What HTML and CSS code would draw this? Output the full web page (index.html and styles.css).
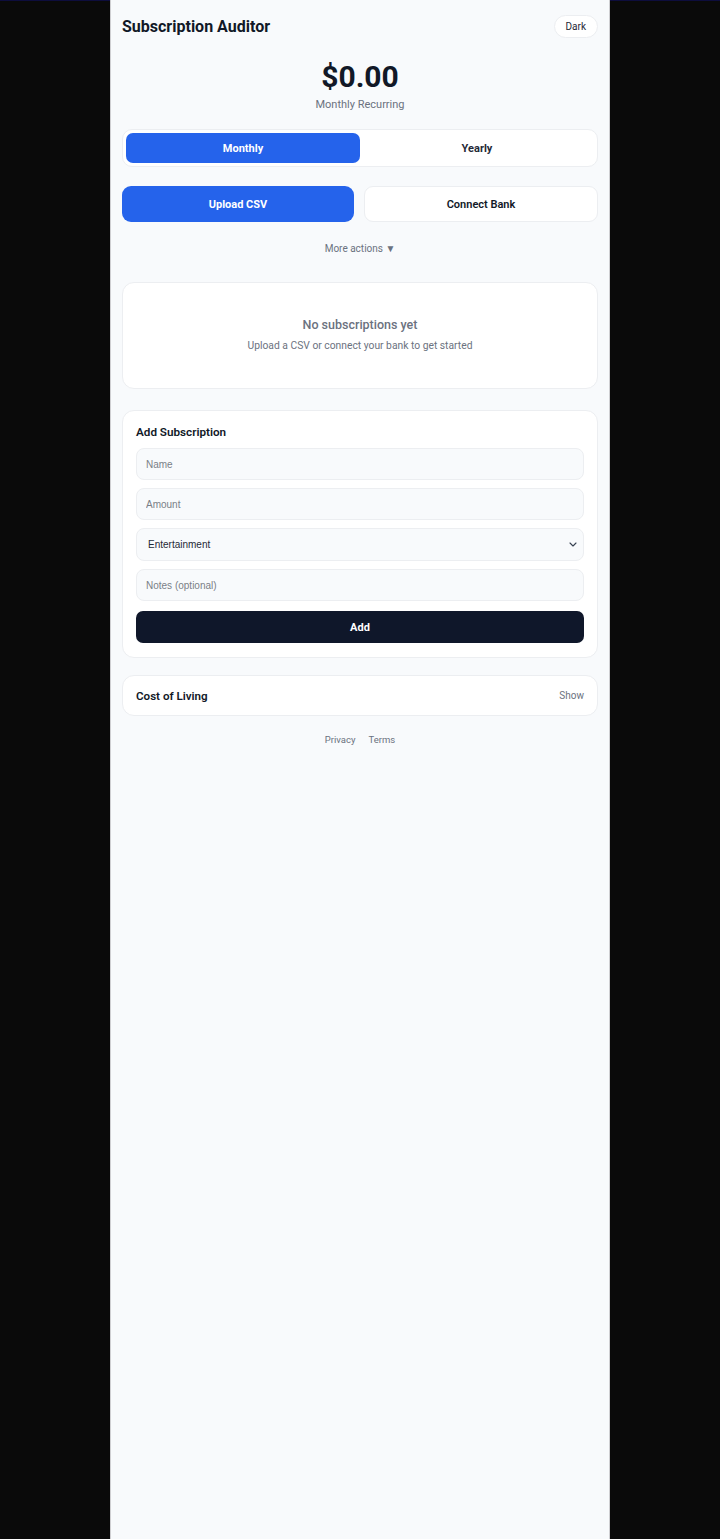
FILE: index.html
```html
<!DOCTYPE html>
<html lang="en">
<head>
<meta charset="utf-8">
<title>Subscription Auditor</title>
<link rel="stylesheet" href="styles.css">
</head>
<body>
<div class="app">
  <header class="top">
    <h1 class="title">Subscription Auditor</h1>
    <button class="theme">Dark</button>
  </header>

  <section class="total">
    <div class="amount">$0.00</div>
    <div class="period">Monthly Recurring</div>
  </section>

  <div class="toggle">
    <button class="seg active">Monthly</button>
    <button class="seg">Yearly</button>
  </div>

  <div class="actions">
    <button class="act primary">Upload CSV</button>
    <button class="act secondary">Connect Bank</button>
  </div>

  <div class="more">More actions ▼</div>

  <section class="card empty">
    <div class="empty-title">No subscriptions yet</div>
    <div class="empty-sub">Upload a CSV or connect your bank to get started</div>
  </section>

  <section class="card form">
    <h2 class="form-title">Add Subscription</h2>
    <input class="field" type="text" placeholder="Name">
    <input class="field" type="text" placeholder="Amount">
    <div class="select-wrap">
      <select class="field select">
        <option>Entertainment</option>
      </select>
      <svg class="chev" width="8" height="5" viewBox="0 0 8 5" aria-hidden="true"><path d="M1 1l3 3 3-3" fill="none" stroke="#374151" stroke-width="1.1" stroke-linecap="round" stroke-linejoin="round"/></svg>
    </div>
    <input class="field" type="text" placeholder="Notes (optional)">
    <button class="add">Add</button>
  </section>

  <section class="card col">
    <span class="col-title">Cost of Living</span>
    <span class="col-show">Show</span>
  </section>

  <footer class="foot">
    <a>Privacy</a>
    <a>Terms</a>
  </footer>
</div>
</body>
</html>
```
FILE: styles.css
```css
html {
  background: linear-gradient(#0d0d3d 0 1px, #0a0a0a 1px);
  min-height: 100%;
}
body {
  margin: 0;
  font-family: Roboto, "Liberation Sans", sans-serif;
  color: #0f172a;
}
.app {
  width: 500px;
  margin: 0 auto;
  min-height: 1539px;
  box-sizing: border-box;
  padding: 15px 11px 20px;
  background: #f8fafc;
  border-left: 1px solid #cfcfd2;
  border-right: 1px solid #cfcfd2;
}
.top {
  display: flex;
  justify-content: space-between;
  align-items: center;
  height: 23px;
}
.title {
  margin: 0;
  font-size: 16px;
  font-weight: 700;
  color: #111827;
}
.theme {
  height: 23px;
  padding: 0 11px;
  border: 1px solid #eceef1;
  border-radius: 12px;
  background: #fff;
  font-family: Roboto, sans-serif;
  font-size: 10px;
  color: #1f2937;
}
.total {
  text-align: center;
  margin-top: 21px;
}
.amount {
  font-size: 30px;
  font-weight: 700;
  line-height: 36px;
  color: #111827;
}
.period {
  font-size: 11px;
  color: #6b7280;
  line-height: 14px;
  margin-top: 3px;
}
.toggle {
  margin-top: 17px;
  display: flex;
  padding: 3px;
  background: #fff;
  border: 1px solid #eceef1;
  border-radius: 10px;
  height: 30px;
}
.seg {
  flex: 1;
  border: 0;
  background: transparent;
  border-radius: 7px;
  font-family: Roboto, sans-serif;
  font-size: 11px;
  font-weight: 700;
  color: #1f2937;
}
.seg.active {
  background: #2563eb;
  color: #fff;
}
.actions {
  margin-top: 19px;
  display: flex;
  gap: 10px;
}
.act {
  flex: 1;
  height: 36px;
  border-radius: 9px;
  font-family: Roboto, sans-serif;
  font-size: 11px;
  font-weight: 700;
}
.act.primary {
  background: #2563eb;
  border: 0;
  color: #fff;
}
.act.secondary {
  background: #fff;
  border: 1px solid #eceef1;
  color: #111827;
  font-weight: 600;
}
.more {
  text-align: center;
  font-size: 10px;
  color: #6b7280;
  margin-top: 20px;
  line-height: 14px;
}
.card {
  background: #fff;
  border: 1px solid #eceef1;
  border-radius: 12px;
  box-sizing: border-box;
}
.empty {
  margin-top: 26px;
  height: 107px;
  padding-bottom: 3px;
  display: flex;
  flex-direction: column;
  align-items: center;
  justify-content: center;
}
.empty-title {
  font-size: 12.5px;
  font-weight: 500;
  color: #6b7280;
  line-height: 16px;
}
.empty-sub {
  margin-top: 6px;
  font-size: 10.3px;
  color: #6b7280;
  line-height: 13px;
}
.form {
  margin-top: 21px;
  padding: 14px 13px 14px;
  display: flex;
  flex-direction: column;
  gap: 8px;
}
.form-title {
  margin: 0 0 1px;
  font-size: 11.7px;
  font-weight: 600;
  line-height: 14px;
  color: #111827;
}
.field {
  width: 100%;
  height: 32px;
  box-sizing: border-box;
  border: 1px solid #eceef1;
  border-radius: 8px;
  background: #f8fafc;
  padding: 0 9px;
  font-family: "Liberation Sans", Arial, sans-serif;
  font-size: 10px;
  color: #1f2937;
}
.field::placeholder {
  color: #7a7f87;
}
.select-wrap {
  position: relative;
}
.select {
  display: block;
  height: 33px;
  padding: 0 8px 0 11px;
  appearance: none;
  -webkit-appearance: none;
}
.chev {
  position: absolute;
  right: 7px;
  top: 14px;
  pointer-events: none;
}
.add {
  height: 32px;
  margin-top: 2px;
  border: 0;
  border-radius: 7px;
  background: #0f172a;
  color: #fff;
  font-family: Roboto, sans-serif;
  font-size: 11px;
  font-weight: 700;
}
.col {
  margin-top: 17px;
  height: 41px;
  padding: 0 13px;
  display: flex;
  justify-content: space-between;
  align-items: center;
}
.col-title {
  font-size: 11.6px;
  font-weight: 600;
  color: #111827;
}
.col-show {
  font-size: 10px;
  color: #6b7280;
}
.foot {
  margin-top: 18px;
  display: flex;
  justify-content: center;
  gap: 13px;
  font-size: 9.5px;
  color: #6b7280;
}
```
